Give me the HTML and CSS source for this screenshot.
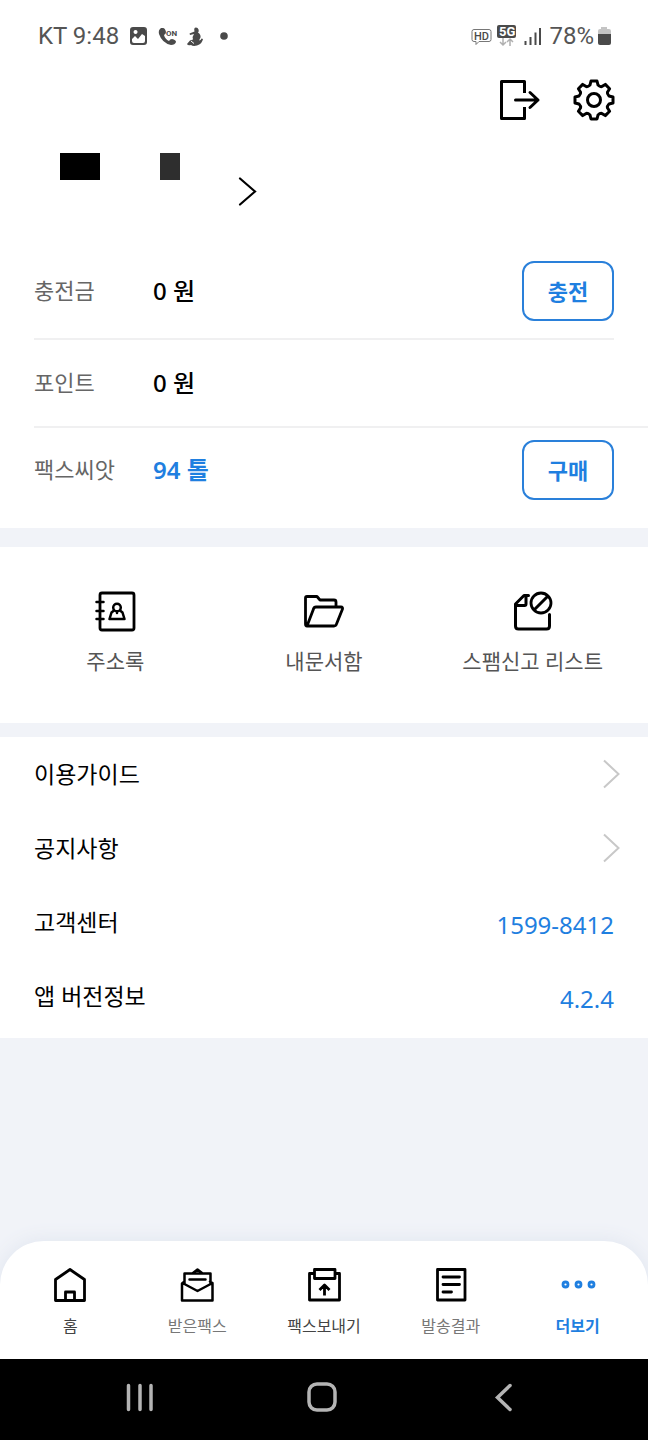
FILE: index.html
```html
<!DOCTYPE html>
<html lang="ko">
<head>
<meta charset="utf-8">
<meta name="viewport" content="width=device-width, initial-scale=1">
<title>더보기</title>
<link rel="stylesheet" href="styles.css">
</head>
<body>
<div class="status">
  <div class="status-group">
    <span>KT 9:48</span>
    <svg width="104" height="24" viewBox="128 24 104 24" aria-hidden="true">
      <path fill="#4a4a4a" fill-rule="evenodd" d="M134 27h11q3 0 3 3v12q0 3-3 3h-11q-3 0-3-3V30q0-3 3-3zM133 41q0 2 2 2h9q2 0 2-2v-5l-3-2-4 5-3-3-3 3zM136.500 30a2 2 0 1 0 .1 0z"/>
      <path fill="#4a4a4a" d="M162 28q-3 2-2 6 3 9 12 11 4 0 5-3 0-2-4-3-2 0-3 2-4-2-5-6 2-1 2-3-1-4-3-4z"/>
      <text x="167" y="36" class="tiny-on">ON</text>
      <path fill="#4a4a4a" d="M197 27.500a3 3 0 0 1 2 5q3 2 2.500 5l-1.500 3q2 0 2.500-2l1.500.5q-1 5-6 6.500-4 1-6-.5-3 1-4-1l3-3.500 3-1q-1-3 1-5.500l-4 1-.5-1.500 5-2q-1-4 1.500-4z"/>
      <path d="M192 41l3 2.500" stroke="#fff"/>
      <circle cx="225" cy="36" r="3.800" fill="#4a4a4a"/>
    </svg>
  </div>
  <div class="status-group status-right">
    <svg width="72" height="26" viewBox="471 23 72 26" aria-hidden="true">
      <path d="M474 29.500h15q2 0 2 2v8q0 2-2 2h-10l-3 3v-3h-2q-2 0-2-2v-8q0-2 2-2z" fill="none" stroke="#777"/>
      <text x="474" y="40" class="tiny-hd">HD</text>
      <rect x="497" y="25" width="19" height="13" rx="2" fill="#4a4a4a"/>
      <text x="499" y="36" class="tiny-5g">5G</text>
      <path d="M503 38v7m-3-3 3 3 3-3M510 46v-7m-3 3 3-3 3 3" fill="none" stroke="#b0b0b0" stroke-width="1.500"/>
      <path d="M525.500 41v4M530.500 37v8M535.500 32.500v12.500M540 28v17" stroke="#4a4a4a" stroke-width="2"/>
    </svg>
    <span>78%</span>
    <svg width="14" height="20" viewBox="596 26 14 20" aria-hidden="true">
      <path d="M600 27h6v2h2q2 0 2 2v3h-13v-3q0-2 2-2h1z" fill="#c4c4c4"/>
      <path d="M597 34h13v9q0 2-2 2h-9q-2 0-2-2z" fill="#4a4a4a"/>
    </svg>
  </div>
</div>

<main class="page">
  <header class="actions">
    <button class="icon-button" aria-label="로그아웃">
      <svg width="42" height="42" viewBox="499 79 42 42" fill="none" stroke="#000" stroke-width="3">
        <path d="M524.500 93V81.500h-23v37h23V107" stroke-linejoin="round"/>
        <path d="M515.500 100H538M530 92.500l8 7.500-8 7.500" stroke-linecap="round" stroke-linejoin="round"/>
      </svg>
    </button>
    <button class="icon-button" aria-label="설정">
      <svg width="42" height="42" viewBox="-21 -21 42 42" fill="none" stroke="#000" stroke-width="3" stroke-linejoin="round">
        <path d="M-4-15L-3-19H3L4-15Q6-13 7.800-13.400L11.300-15.600 15.600-11.300 13.400-7.800Q13-6 15-4L19-3V3L15 4Q13 6 13.400 7.800L15.600 11.300 11.300 15.600 7.800 13.400Q6 13 4 15L3 19H-3L-4 15Q-6 13-7.800 13.400L-11.300 15.600-15.600 11.300-13.400 7.800Q-13 6-15 4L-19 3V-3L-15-4Q-13-6-13.400-7.800L-15.600-11.300-11.300-15.600-7.800-13.400Q-6-13-4-15z"/>
        <circle r="6.500"/>
      </svg>
    </button>
  </header>

  <a class="profile" href="#profile" aria-label="내 정보">
    <span class="mask"><i class="mask-wide"></i><i class="mask-narrow"></i></span>
    <svg width="22" height="32" viewBox="237 175 22 32" fill="none" stroke="#000" stroke-width="2.200"><path d="M240 178.500l15 13-15 13" stroke-linecap="round"/></svg>
  </a>

  <section class="balances">
    <div class="balance first">
      <span class="name">충전금</span><span class="value">0 원</span>
      <button class="outline">충전</button>
    </div>
    <div class="balance second">
      <span class="name">포인트</span><span class="value">0 원</span>
    </div>
    <div class="balance third">
      <span class="name">팩스씨앗</span><span class="value blue">94 톨</span>
      <button class="outline">구매</button>
    </div>
  </section>

  <nav class="shortcuts" aria-label="바로가기">
    <a href="#contacts">
      <svg width="42" height="42" viewBox="94 590 42 42" fill="none" stroke="#000" stroke-width="2.800" stroke-linecap="round" stroke-linejoin="round">
        <rect x="100" y="593" width="34" height="37" rx="2"/>
        <path d="M96.500 602h7M96.500 611h7M96.500 619h7M114 610.500l-2.500 2-2 6.500h15l-2-6.500-2.500-2M117 611.500v1.500" stroke-width="2.500"/>
        <circle cx="117" cy="607.500" r="3.800" stroke-width="2.500"/>
      </svg>
      <span>주소록</span>
    </a>
    <a href="#documents">
      <svg width="42" height="42" viewBox="303 590 42 42" fill="none" stroke="#000" stroke-width="2.800" stroke-linecap="round" stroke-linejoin="round">
        <path d="M307 626q-1.500 0-1.500-2v-26q0-1.500 1.500-1.500h10l3 3.500h14q2 0 2 2v4.500M307 626l6.500-17q.5-2 2.500-2h25q2 0 1.500 2l-6 15q-.5 2-2.500 2z"/>
      </svg>
      <span>내문서함</span>
    </a>
    <a href="#spam">
      <svg width="42" height="42" viewBox="512 590 42 42" fill="none" stroke="#000" stroke-width="3" stroke-linecap="round" stroke-linejoin="round">
        <path d="M528.500 595.500H524l-8.500 8.500v22q0 3 3 3h28q3 0 3-3v-11.500M515.500 605.500h9q1.500 0 1.500-1.500v-8.500"/>
        <circle cx="541" cy="603" r="10" stroke-width="2.800"/>
        <path d="M534.500 609.500l13-13"/>
      </svg>
      <span>스팸신고 리스트</span>
    </a>
  </nav>

  <section class="menu">
    <a class="menu-row link-row" href="#guide"><span>이용가이드</span>
      <svg width="20" height="32" viewBox="602 758 20 32" fill="none" stroke="#c8c8c8" stroke-width="2"><path d="M604 760.500l14.500 13.500-14.500 13.500"/></svg></a>
    <a class="menu-row link-row" href="#notice"><span>공지사항</span>
      <svg width="20" height="32" viewBox="602 758 20 32" fill="none" stroke="#c8c8c8" stroke-width="2"><path d="M604 760.500l14.500 13.500-14.500 13.500"/></svg></a>
    <div class="menu-row"><span>고객센터</span><a class="info" href="tel:1599-8412">1599-8412</a></div>
    <div class="menu-row"><span>앱 버전정보</span><span class="info">4.2.4</span></div>
  </section>
</main>

<nav class="tabs" aria-label="주 메뉴">
  <a class="tab dark" href="#home">
    <svg width="36" height="36" viewBox="52 1267 36 36" fill="none" stroke="#000" stroke-width="2.800" stroke-linejoin="round"><path d="M55.500 1279.500L70 1269.500l14.500 10v21h-29zM65.500 1300v-8h9v8"/></svg>
    <span>홈</span>
  </a>
  <a class="tab" href="#inbox">
    <svg width="36" height="36" viewBox="179 1267 36 36" fill="none" stroke="#000" stroke-width="2.800" stroke-linejoin="round" stroke-linecap="round"><path d="M184.500 1281.500l-2.500 2v17h30.500v-17l-2.500-2M184.500 1284v-10.500h26V1284M182.500 1283l15 8 15-8M193 1273l4.500-3.500 4.500 3.500M189.500 1279.500h16" stroke-width="2.500"/></svg>
    <span>받은팩스</span>
  </a>
  <a class="tab dark" href="#send">
    <svg width="36" height="36" viewBox="306 1267 36 36" fill="none" stroke="#000" stroke-width="2.800" stroke-linejoin="round"><path d="M314 1273.500h-4.500v26.500h30v-26.500H335M314.500 1269.500h20.500v9h-20.500zM324.500 1295.500V1285M319.500 1290l5-5 5 5"/></svg>
    <span>팩스보내기</span>
  </a>
  <a class="tab" href="#results">
    <svg width="36" height="36" viewBox="434 1267 36 36" fill="none" stroke="#000" stroke-width="2.800" stroke-linecap="round"><path d="M438.500 1269.500h27.500v30.500h-27.500zM444 1277h16.500M444 1284.500h16.500M444 1292h8.500" stroke-linejoin="round"/></svg>
    <span>발송결과</span>
  </a>
  <a class="tab active" href="#more" aria-current="page">
    <svg width="36" height="36" viewBox="560 1267 36 36" fill="none" stroke="#1f7fe0" stroke-width="2.800"><circle cx="565.500" cy="1284.500" r="2.500"/><circle cx="578.500" cy="1284.500" r="2.500"/><circle cx="591.500" cy="1284.500" r="2.500"/></svg>
    <span>더보기</span>
  </a>
</nav>

<div class="system">
  <button aria-label="최근 앱"><svg width="32" height="32" viewBox="124 1382 32 32" stroke="#b4b4b4" stroke-width="3.500" stroke-linecap="round"><path d="M128.500 1385.500v24M140 1385.500v24M151 1385.500v24"/></svg></button>
  <button aria-label="홈 화면"><svg width="32" height="32" viewBox="305 1382 32 32" fill="none" stroke="#b4b4b4" stroke-width="3.500"><rect x="308" y="1384" width="26" height="26" rx="8"/></svg></button>
  <button aria-label="뒤로"><svg width="32" height="32" viewBox="487 1382 32 32" fill="none" stroke="#b4b4b4" stroke-width="3.500" stroke-linecap="round"><path d="M509 1385.500l-12.500 12 12.500 12"/></svg></button>
</div>
</body>
</html>
```
FILE: styles.css
```css
* {
  box-sizing: border-box;
}

body {
  margin: 0;
  min-height: 100vh;
  display: flex;
  flex-direction: column;
  background: #f1f3f8;
  color: #000;
  font-family: "Noto Sans", "Noto Sans CJK KR", sans-serif;
  font-size: 24px;
  line-height: 32px;
}

a {
  color: inherit;
  text-decoration: none;
}

button {
  border: 0;
  padding: 0;
  background: none;
  font: inherit;
  cursor: pointer;
}

svg {
  display: block;
  flex: none;
}

.status {
  display: flex;
  justify-content: space-between;
  height: 72px;
  padding: 0 37px 0 38px;
  background: #fff;
  color: #555;
  font-family: Roboto, sans-serif;
  font-weight: 400;
}

.status-group {
  display: flex;
  align-items: center;
  gap: 8px;
}

.status-right {
  gap: 3px;
}

.status-right span {
  padding-left: 3px;
}

.tiny-on,
.tiny-hd,
.tiny-5g {
  font-family: Roboto, sans-serif;
  font-weight: 700;
  fill: #4a4a4a;
}

.tiny-on {
  font-size: 8px;
}

.tiny-hd {
  font-size: 11px;
  font-weight: 500;
}

.tiny-5g {
  font-size: 13px;
  fill: #fff;
}

.page {
  flex: 1;
}

.actions {
  display: flex;
  justify-content: flex-end;
  align-items: center;
  gap: 32px;
  height: 56px;
  padding-right: 33px;
  background: #fff;
}

.profile {
  display: flex;
  gap: 57px;
  height: 116px;
  padding: 25px 60px;
  background: #fff;
}

.profile svg {
  margin-top: 22px;
}

.mask {
  display: flex;
  gap: 60px;
  height: 27px;
}

.mask-wide {
  width: 40px;
  background: #000;
}

.mask-narrow {
  width: 20px;
  background: #2e2e2e;
}

.balances {
  padding: 0 0 16px 34px;
  background: #fff;
}

.balance {
  display: flex;
  align-items: center;
  padding-right: 34px;
}

.first {
  height: 96px;
  margin-right: 34px;
  padding-right: 0;
  border-bottom: 2px solid #f0f0f1;
}

.second {
  height: 88px;
  border-bottom: 2px solid #f0f0f1;
}

.third {
  height: 84px;
}

.name {
  width: 119px;
  padding-bottom: 2px;
  color: #666;
  font-size: 22px;
}

.value {
  padding-bottom: 1px;
  font-weight: 500;
}

.blue {
  color: #1f7fe0;
  font-weight: 600;
}

.outline {
  width: 92px;
  height: 60px;
  margin-left: auto;
  border: 2px solid #2a80da;
  border-radius: 12px;
  color: #1f7fe0;
  font-size: 22px;
  font-weight: 600;
}

.shortcuts {
  display: grid;
  grid-template-columns: repeat(3, 1fr);
  margin: 19px 0 14px;
  padding: 43px 11px 46px;
  background: #fff;
  color: #555;
  font-size: 21px;
}

.shortcuts a {
  display: flex;
  flex-direction: column;
  align-items: center;
  gap: 13px;
}

.menu {
  background: #fff;
  padding-bottom: 5px;
}

.menu-row {
  display: flex;
  align-items: center;
  justify-content: space-between;
  height: 74px;
  padding: 0 34px;
  font-size: 23px;
}

.link-row {
  padding-right: 26px;
}

.info {
  padding-top: 6px;
  color: #1f7fe0;
  font-size: 24px;
}

.tabs {
  display: grid;
  grid-template-columns: repeat(5, 1fr);
  height: 118px;
  padding: 26px 7px 0;
  border-radius: 44px 44px 0 0;
  background: #fff;
  box-shadow: 0 0 20px #dfe5ef;
  clip-path: inset(-30px 0 0);
}

.tab {
  display: flex;
  flex-direction: column;
  align-items: center;
  gap: 11px;
  color: #777;
  font-size: 16px;
  line-height: 24px;
}

.dark {
  color: #444;
}

.active {
  color: #1f7fe0;
  font-weight: 700;
}

.system {
  display: grid;
  grid-template-columns: repeat(3, 1fr);
  height: 81px;
  padding: 0 53px 4px 49px;
  background: #000;
}

.system button {
  display: flex;
  align-items: center;
  justify-content: center;
}
```
